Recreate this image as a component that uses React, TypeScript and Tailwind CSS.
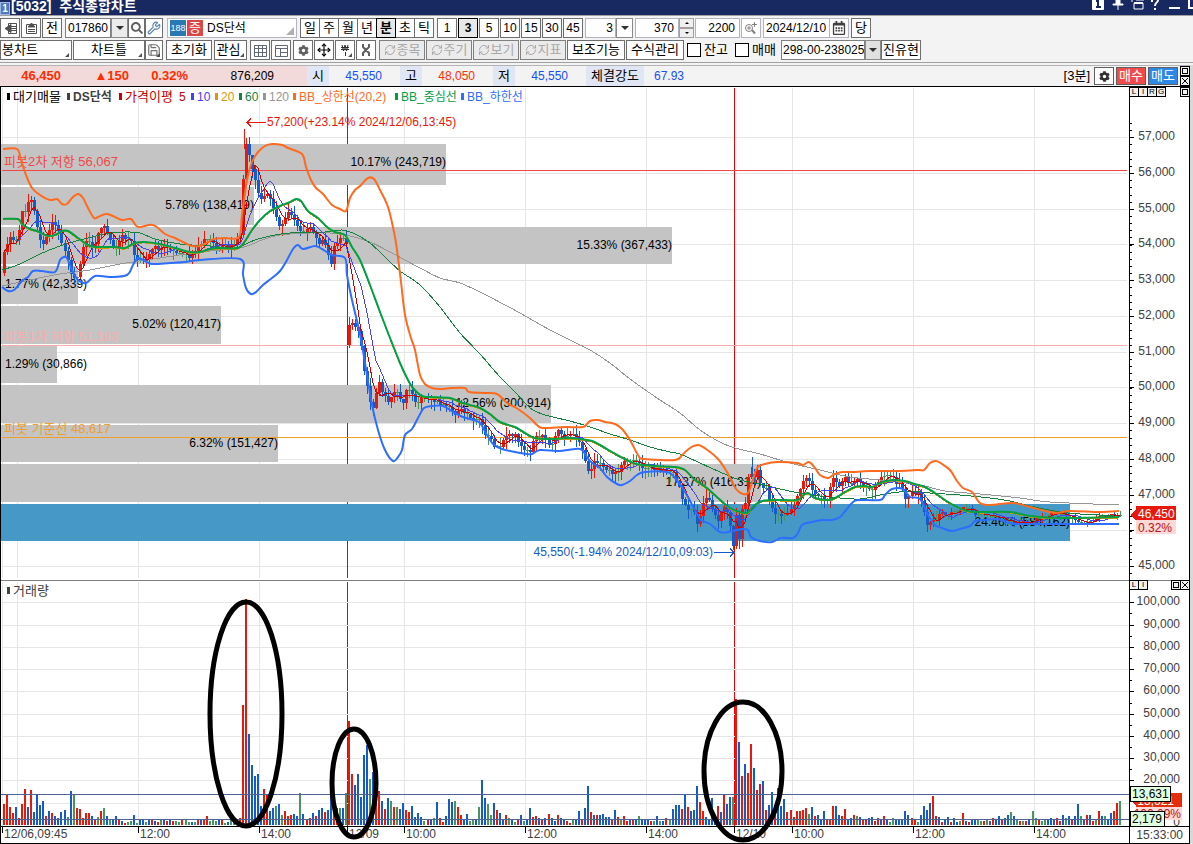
import { useState } from "react"
import type { ReactNode } from "react"
import clsx from "clsx"
import { Move, RefreshCw, Save, Wrench } from "lucide-react"
import { FaCog, FaRegCalendarAlt, FaSearch } from "react-icons/fa"

type Point = [number, number]

const RED = "#e8190a"
const BLUE = "#145bc8"
const GREEN = "#46965f"
const STEP = 3.025

// one entry per 3 minute bar: colour and height
const volumes =
  "r21 r30 r18 r12 b18 r7 r21 r36 b18 r35 b13 b30 b20 b24 r9 b14 r12 b9 b7 b13 b15 g8 b34 g30 r17 r16 r7 r12 r12 b9 r6 g8 r14 g17 b9 g5 b6 b9 r6 b4 r2 g3 g4 b10 g2 b5 b5 g3 b5 r5 b4 r3 g5 b5 r4 b5 r4 g4 g3 r5 g5 g3 b3 g3 r5 b5 r5 r9 g4 g5 g4 b5 r5 g2 b3 g5 g5 r5 r7 r120 r226 b91 b60 b49 b51 b19 r36 r30 b14 b17 g19 b21 g10 r14 r9 r10 b11 b9 g32 b11 r6 r7 b12 r9 b15 b17 r13 b15 b34 r24 r17 g17 b17 g32 r104 r51 b40 b51 b28 b70 b80 g46 b53 r24 r34 b24 r16 b27 g24 r18 g18 b16 b22 r15 r13 b19 b8 b12 b8 g4 r5 b5 g7 b23 r7 r3 b9 b26 b23 g24 r18 r10 b5 b11 g4 g5 b5 g18 b45 b27 g21 g10 b22 r15 b12 b6 r10 g7 b5 g3 r5 b10 g4 b6 b17 r8 r9 b7 r6 b7 r11 b7 b4 r10 b7 b5 r4 r2 g5 b5 b14 r5 b17 b39 r13 b10 r10 b10 b11 b8 b8 r5 b15 r8 g6 r9 r4 b5 r5 b5 g9 b5 b5 b5 r4 g4 b9 g4 b4 r7 g5 b16 b20 b20 r16 b30 r18 b14 b15 b39 r23 r14 b8 b5 b27 b5 r19 b13 r30 b21 b28 g28 r126 b83 r49 b61 r52 r81 b57 r35 r41 b44 r15 b20 b33 r20 b37 b19 b26 r13 r15 r8 r14 r14 r15 r17 g11 b18 r9 b10 b5 b14 r5 r5 r19 b19 b10 r9 r16 b5 b7 r10 g9 b8 r6 r5 b7 b8 r4 r7 b5 r9 b5 g3 g7 b5 b5 b5 b14 b10 r7 r5 g3 b10 b19 b15 b22 r29 r9 b8 r3 b5 b8 r3 b7 b3 g4 r12 b4 r3 b5 b5 g5 g4 r4 g5 b4 r7 b5 b9 r5 b7 b10 g13 b9 g5 r4 g4 r4 b5 g14 g7 r5 g4 g5 b5 b7 b5 r7 r4 b10 g7 b9 r5 b9 b21 g9 b5 r10 b10 r4 g5 r14 b9 g9 b5 b12 r14 r22 g24".split(
    " "
  )

const parse = (s: string): Point[] =>
  s.split(" ").map((p) => p.split(",").map(Number) as Point)

const smooth = (s: string) => {
  const pts = parse(s)
  return pts
    .map((p, i) => {
      if (i === 0) return `M${p[0]} ${p[1]}`
      const a = pts[i - 2] ?? pts[i - 1]
      const b = pts[i - 1]
      const d = pts[i + 1] ?? p
      const c1 = [b[0] + (p[0] - a[0]) / 6, b[1] + (p[1] - a[1]) / 6]
      const c2 = [p[0] - (d[0] - b[0]) / 6, p[1] - (d[1] - b[1]) / 6]
      return `C${c1.join(" ")} ${c2.join(" ")} ${p.join(" ")}`
    })
    .join("")
}

const closes = parse(
  "2,251 6,249 9,240 12,231 14,248 17,237 20,226 23,208 26,215 29,197 32,198 34,208 37,228 40,237 44,244 47,235 50,226 53,222 56,225 59,234 62,243 66,255 69,264 71,277 75,281 78,276 81,254 84,245 87,240 90,245 93,246 96,240 99,230 103,226 106,230 110,238 115,249 119,240 121,234 126,238 131,242 133,252 137,258 141,261 147,261 152,250 156,247 160,249 166,244 172,252 180,255 187,257 193,256 197,248 204,240 210,240 214,246 218,252 224,246 230,248 236,242 240,237 243,177 246,144 249,157 252,170 256,186 259,197 262,200 265,195 269,194 272,200 275,215 279,226 283,222 287,213 290,208 293,218 297,228 303,234 307,226 311,231 315,237 319,243 323,240 328,255 331,262 334,246 338,240 342,240 346,244 348,326 352,323 356,326 359,335 362,348 364,372 367,385 370,400 373,410 376,396 380,377 382,393 387,400 392,398 396,388 400,397 403,407 406,390 408,385 412,395 417,403 420,400 425,396 432,399 438,405 444,402 449,407 453,413 458,413 462,410 468,415 475,419 480,421 485,433 490,438 493,447 500,448 504,436 509,434 515,436 519,442 525,449 531,452 535,437 540,434 545,437 550,448 556,430 560,436 570,434 576,438 582,450 586,468 590,470 595,460 600,465 607,470 613,475 618,470 622,463 630,459 637,463 645,468 655,468 665,470 672,473 678,485 683,505 687,510 692,507 697,523 701,512 703,500 708,498 714,515 718,522 722,508 726,507 730,525 733,546 736,517 739,540 742,510 745,503 748,475 750,470 753,480 757,468 761,487 765,487 770,500 775,512 782,518 787,513 792,510 797,492 803,480 808,481 813,492 820,498 827,500 832,477 838,485 845,478 850,487 857,480 865,486 872,492 877,482 885,473 892,477 900,485 907,500 912,492 918,492 923,508 927,528 931,520 936,518 941,511 947,517 953,508 958,515 963,506 970,507 976,515 985,514 995,516 1005,520 1015,523 1025,521 1040,518 1055,512 1065,515 1075,520 1085,524 1095,518 1105,516 1120,514"
)

const upper = smooth(
  "3,149 17,149 21,160 26,175 32,188 40,195 50,200 57,199 62,204 67,204 72,198 78,194 83,198 88,208 94,218 98,217 106,214 113,216 122,220 131,219 138,227 153,225 165,234 175,238 185,243 192,246 200,246 208,242 214,239 225,238 239,237 242,215 247,180 252,162 258,152 265,146 272,144 282,145 288,148 302,154 306,167 311,180 316,188 323,194 332,205 340,209 346,211 350,198 355,190 360,186 368,178 374,179 380,190 388,207 394,232 397,250 401,282 405,315 411,338 415,350 420,375 425,384 432,388 443,389 451,388 465,388 469,392 485,393 497,394 507,403 518,409 530,418 537,425 543,428 565,427 583,427 590,421 598,420 605,422 615,424 622,429 630,440 638,455 644,459 675,460 682,455 690,448 698,445 706,449 718,459 727,472 736,489 743,494 748,493 752,483 757,468 765,464 778,462 797,463 803,465 809,462 815,468 820,475 828,478 835,474 842,472 852,472 870,471 900,471 918,470 924,470 930,463 936,461 942,464 950,470 957,481 963,488 972,492 980,503 990,505 1013,503 1030,507 1045,511 1057,513 1070,511 1100,512 1119,511"
)

const lower = smooth(
  "2,287 8,291 14,290 22,281 28,277 33,271 42,271 55,272 60,260 64,257 67,258 72,270 78,280 86,283 95,276 110,277 127,275 133,265 138,258 145,261 152,264 170,263 185,262 200,260 240,259 243,275 246,288 251,294 256,292 263,285 272,278 280,271 287,260 293,249 298,245 303,249 315,246 322,249 332,255 345,258 347,275 352,300 358,325 362,345 367,375 372,405 378,430 385,450 393,461 398,457 402,450 405,435 412,429 418,418 424,408 432,406 443,406 453,412 463,417 473,420 480,423 487,435 493,444 502,449 515,452 527,454 532,454 540,450 560,451 575,449 582,450 590,461 600,468 607,477 617,484 622,485 630,481 637,475 645,472 667,472 675,478 685,492 695,510 701,520 710,524 720,532 728,532 742,529 748,530 751,537 760,541 772,542 781,538 793,538 798,533 802,525 812,522 822,520 832,520 840,517 846,510 852,503 858,500 880,500 885,495 892,489 903,489 910,497 920,499 928,515 935,525 942,528 952,531 960,529 970,526 975,521 985,520 997,519 1010,523 1025,524 1119,524"
)

const middle = smooth(
  "3,219 18,219 22,224 30,229 37,231 48,236 57,234 62,231 68,231 78,238 88,245 96,247 115,247 125,248 135,243 145,242 160,244 175,248 190,252 200,252 210,249 220,248 238,248 245,241 252,230 260,220 270,211 280,206 290,202 296,199 301,201 308,211 318,218 327,227 335,232 345,235 352,247 360,260 370,285 380,312 390,338 400,363 407,378 413,388 422,396 430,397 450,398 460,402 470,405 480,408 490,414 500,422 515,427 525,433 535,438 550,439 570,438 580,439 592,441 600,445 612,452 625,459 637,464 655,466 675,467 685,470 695,480 707,488 718,498 730,508 740,512 747,513 755,505 762,501 775,500 797,500 802,496 808,493 815,498 828,500 835,498 845,492 855,487 865,486 872,487 880,483 892,480 905,481 915,484 925,487 935,493 945,500 955,506 967,511 980,512 1010,512 1030,516 1060,518 1119,517"
)

const ma60 = smooth(
  "2,270 20,264 40,254 60,246 80,240 105,234 125,232 140,233 155,239 180,244 210,246 235,248 255,240 275,235 290,233 325,232 342,230 355,234 370,243 385,257 400,271 420,285 440,307 460,333 480,354 500,377 515,392 530,408 545,415 570,421 590,427 610,434 630,440 650,447 670,452 680,454 700,463 720,472 740,480 760,484 780,489 805,494 830,497 860,499 885,494 910,491 930,493 960,495 990,498 1010,501 1030,506 1060,512 1080,514 1119,516"
)

const ma120 = smooth(
  "2,286 30,280 60,274 90,270 120,264 160,258 200,252 240,248 262,240 280,235 310,233 330,233 350,236 370,242 390,252 420,268 440,278 460,283 480,292 505,305 520,313 550,330 570,340 590,350 610,363 630,379 660,400 680,413 700,430 720,442 735,448 760,454 790,463 820,470 850,477 880,480 920,485 945,491 980,494 1020,498 1050,502 1119,505"
)

const profile = [
  { y: 144, h: 41, w: 445, text: "10.17% (243,719)" },
  { y: 187, h: 38, w: 253, text: "5.78% (138,419)" },
  { y: 227, h: 37, w: 671, text: "15.33% (367,433)" },
  { y: 266, h: 38, w: 77, text: "1.77% (42,339)" },
  { y: 306, h: 38, w: 220, text: "5.02% (120,417)" },
  { y: 346, h: 37, w: 56, text: "1.29% (30,866)" },
  { y: 385, h: 38, w: 550, text: "12.56% (300,914)" },
  { y: 425, h: 37, w: 277, text: "6.32% (151,427)" },
  { y: 464, h: 38, w: 760, text: "17.37% (416,314)" },
  { y: 504, h: 37, w: 1069, text: "24.46% (584,162)" },
]

const pivots = [
  { y: 170, color: "#f04848", text: "피봇2차 저항 56,067" },
  { y: 345, color: "#f9adad", text: "피봇1차 저항 51,183" },
  { y: 437, color: "#efa02c", text: "피봇 기준선 48,617" },
]

const legend = [
  { x: 7, color: "#000", text: "대기매물", big: true },
  { x: 67, color: "#404040", text: "DS단석", bold: true },
  { x: 119, color: "#c80000", text: "가격이평", big: true },
  { x: 191, color: "#4040ff", text: "10" },
  { x: 215, color: "#dc960a", text: "20" },
  { x: 239, color: "#14823c", text: "60" },
  { x: 263, color: "#969696", text: "120" },
  { x: 293, color: "#ff6a1e", text: "BB_상한선(20,2)" },
  { x: 395, color: "#00a046", text: "BB_중심선" },
  { x: 461, color: "#2d6eff", text: "BB_하한선" },
]

const gridX = [2, 17, 138, 259, 404, 525, 646, 792, 913, 1034]
const dayX = [347, 734]

const timeLabels: [number, string][] = [
  [2, "12/06,09:45"],
  [138, "12:00"],
  [259, "14:00"],
  [347, "12/09"],
  [404, "10:00"],
  [525, "12:00"],
  [646, "14:00"],
  [734, "12/10"],
  [792, "10:00"],
  [913, "12:00"],
  [1034, "14:00"],
]

const priceY = (p: number) => Math.round(137 + (57 - p) * 35.75)
const volumeY = (v: number) => Math.round(825 - v * 2.227)
const barX = (i: number) => Math.round(3 + i * STEP)
const noise = (n: number) => {
  const v = Math.sin(n * 12.9898) * 43758.5453
  return v - Math.floor(v)
}

const closeAt = (x: number) => {
  const i = closes.findIndex((p) => p[0] >= x)
  if (i <= 0) return closes[i === 0 ? 0 : closes.length - 1][1]
  const [x0, y0] = closes[i - 1]
  const [x1, y1] = closes[i]
  return y0 + ((y1 - y0) * (x - x0)) / (x1 - x0)
}

const candles = volumes.map((_, i) => {
  const x = 4 + i * STEP
  const wobble = x > 940 ? 3 : 5
  return { x: barX(i), y: closeAt(x) + (noise(i + 1) - 0.5) * wobble }
})

const average = (n: number) =>
  candles
    .map((c, i) => {
      const part = candles.slice(Math.max(0, i - n + 1), i + 1)
      const sum = part.reduce((a, b) => a + b.y, 0)
      return `${c.x + 1},${Math.round(sum / part.length)}`
    })
    .join(" ")

const Candles = () => (
  <g>
    {candles.map((c, i) => {
      const newDay = i > 0 && Math.abs(c.y - candles[i - 1].y) > 70
      const open = i === 0 ? 273 : newDay ? 345 : candles[i - 1].y
      const top = Math.round(Math.min(open, c.y))
      const bottom = Math.round(Math.max(open, c.y))
      const flat = bottom - top < 2
      const color = flat ? GREEN : c.y < open ? RED : BLUE
      const reach = c.x > 940 ? 4 : 9
      const up = Math.round(noise(i + 400) * reach)
      const down = Math.round(noise(i + 900) * reach)
      return (
        <g key={i} fill={color}>
          <rect x={c.x + 1} y={top - up} width={1} height={bottom - top + up + down + 1} />
          <rect x={c.x} y={top} width={3} height={Math.max(1, bottom - top)} />
        </g>
      )
    })}
    <rect x={244} y={129} width={1} height={20} fill={RED} />
    <rect x={752} y={457} width={1} height={20} fill={BLUE} />
  </g>
)

const PriceChart = () => (
  <svg
    viewBox="0 87 1190 493"
    className="block h-auto w-full bg-white text-[12px]"
    shapeRendering="crispEdges"
    role="img"
    aria-label="DS단석 3분 차트"
  >
    <g fill="#e6e6e6">
      {gridX.map((x) => (
        <rect key={x} x={x} y={88} width={1} height={490} />
      ))}
      {[57, 56, 55, 54, 53, 52, 51, 50, 49, 48, 47, 46, 45].map((p) => (
        <rect key={p} x={2} y={priceY(p)} width={1125} height={1} />
      ))}
    </g>
    {dayX.map((x) => (
      <rect key={x} x={x} y={88} width={1} height={490} fill="#f00000" />
    ))}
    {profile.map((p, i) => (
      <rect key={p.y} x={1} y={p.y} width={p.w} height={p.h} fill={i === 9 ? "#4698c6" : "#c4c4c4"} />
    ))}
    {profile.map((p) => {
      const short = p.w < 90
      return (
        <text
          key={p.y}
          x={short ? 5 : p.w + 1}
          y={p.y + 22}
          textAnchor={short ? "start" : "end"}
        >
          {p.text}
        </text>
      )
    })}
    {pivots.map((p) => (
      <g key={p.y} fill={p.color}>
        <rect x={2} y={p.y} width={1125} height={1} />
        <text x={4} y={p.y - 4} fontSize={13}>
          {p.text}
        </text>
      </g>
    ))}

    <Candles />
    <g fill="none">
      <path d={ma120} stroke="#969696" />
      <path d={ma60} stroke="#14823c" />
      <polyline points={average(10)} stroke="#4646f0" />
      <polyline points={average(5)} stroke="#c80000" />
      <path d={middle} stroke="#dc960a" transform="translate(0 1)" />
      <g strokeWidth={2} strokeLinejoin="round" shapeRendering="auto">
        <path d={lower} stroke="#2d6eff" />
        <path d={middle} stroke="#00a046" />
        <path d={upper} stroke="#ff6a1e" />
      </g>
    </g>

    {legend.map((l) => (
      <g key={l.x} fill={l.color}>
        <rect x={l.x} y={93} width={3} height={7} />
        <text x={l.x + 6} y={101} fontSize={l.big ? 13 : 12} fontWeight={l.bold ? 700 : 400}>
          {l.text}
        </text>
      </g>
    ))}
    <text x={179} y={101} fill="#c80000">
      5
    </text>

    <g fill={RED}>
      <text x={267} y={126}>
        57,200(+23.14% 2024/12/06,13:45)
      </text>
      <path d="M247 122.5h19M251 118.5l-4 4 4 4" fill="none" stroke={RED} />
    </g>
    <g fill={BLUE}>
      <text x={713} y={556} textAnchor="end">
        45,550(-1.94% 2024/12/10,09:03)
      </text>
      <path d="M714 552.5h20M730 548.5l4 4-4 4" fill="none" stroke={BLUE} />
    </g>

    <rect x={0} y={87} width={1} height={493} />
    <rect x={1129} y={87} width={1} height={493} />
    <rect x={1189} y={87} width={1} height={493} />
    {Array.from({ length: 64 }, (_, i) => {
      const y = Math.round(priceY(57.4) + i * 7.15)
      return y < 574 && <rect key={i} x={1130} y={y} width={2} height={1} />
    })}
    {[57, 56, 55, 54, 53, 52, 51, 50, 49, 48, 47, 46, 45].map((p) => (
      <g key={p} fill="#404040">
        <rect x={1130} y={priceY(p)} width={4} height={1} fill="#000" />
        {p !== 46 && (
          <text x={1175} y={priceY(p) + 3} textAnchor="end">
            {p},000
          </text>
        )}
      </g>
    ))}
    <path d="M1130 515l6-6v12z" fill={RED} />
    <rect x={1136} y={506} width={40} height={14} fill={RED} />
    <text x={1138} y={518} fill="#fff">
      46,450
    </text>
    <rect x={1136} y={520} width={40} height={14} fill="#ffd8d8" />
    <text x={1138} y={532} fill="#b41414">
      0.32%
    </text>
  </svg>
)

const VolumeChart = () => (
  <svg
    viewBox="0 580 1190 264"
    className="block h-auto w-full bg-white text-[12px]"
    shapeRendering="crispEdges"
    role="img"
    aria-label="거래량"
  >
    {dayX.map((x) => (
      <rect key={x} x={x} y={582} width={1} height={244} fill="#f00000" />
    ))}
    <g fill="#e6e6e6">
      {gridX.map((x) => (
        <rect key={x} x={x} y={582} width={1} height={244} />
      ))}
      {[100, 90, 80, 70, 60, 50, 40, 30, 20, 10].map((v) => (
        <rect key={v} x={2} y={volumeY(v)} width={1127} height={1} />
      ))}
    </g>
    {volumes.map((v, i) => {
      const h = Number(v.slice(1))
      const color = v[0] === "r" ? RED : v[0] === "b" ? BLUE : GREEN
      return <rect key={i} x={barX(i)} y={825 - h} width={2} height={h} fill={color} />
    })}
    <rect x={1} y={794} width={1128} height={1} fill="#506496" />
    <rect x={1} y={819} width={1128} height={1} fill="#506496" />
    <rect x={0} y={580} width={1190} height={1} fill="#808080" />
    <rect x={7} y={587} width={3} height={7} fill="#404040" />
    <text x={13} y={595} fontSize={13} fill="#404040">
      거래량
    </text>

    {[100, 90, 80, 70, 60, 50, 40, 30, 20].map((v) => (
      <g key={v}>
        <rect x={1130} y={volumeY(v)} width={4} height={1} />
        <rect x={1130} y={volumeY(v - 5)} width={2} height={1} />
        <text x={1180} y={volumeY(v) + 3} textAnchor="end" fill="#404040">
          {v},000
        </text>
      </g>
    ))}
    <text x={1180} y={826} textAnchor="end" fill="#404040">
      0
    </text>
    <path d="M1130 800l6-6v12z" fill={RED} />
    <rect x={1136} y={793} width={46} height={14} fill="#e62d0a" />
    <text x={1174} y={805} textAnchor="end" fill="#fff">
      13,621
    </text>
    <rect x={1136} y={807} width={46} height={13} fill="#ffd8d8" />
    <text x={1181} y={818} textAnchor="end" fill="#b41414">
      100.09%
    </text>
    <rect x={1130.5} y={786.5} width={40} height={15} fill="#e1ffe1" stroke="#000" />
    <text x={1132} y={798}>
      13,631
    </text>
    <rect x={1130.5} y={811.5} width={34} height={15} fill="#e1ffe1" stroke="#000" />
    <text x={1132} y={823}>
      2,179
    </text>

    <rect x={0} y={580} width={1} height={264} />
    <rect x={1129} y={580} width={1} height={264} />
    <rect x={1189} y={580} width={1} height={264} />
    <rect x={0} y={826} width={1190} height={1} />
    <rect x={0} y={843} width={1190} height={1} />
    {timeLabels.map(([x, text]) => (
      <g key={x}>
        <rect x={x} y={827} width={1} height={6} />
        <text x={x + 2} y={838} fill="#404040">
          {text}
        </text>
      </g>
    ))}
    <text x={1183} y={839} textAnchor="end" fill="#404040">
      15:33:00
    </text>

    <g fill="none" stroke="#000" strokeWidth={5} shapeRendering="auto">
      <ellipse cx={246} cy={714} rx={36} ry={112} />
      <ellipse cx={354} cy={783} rx={22} ry={54} />
      <ellipse cx={743} cy={771} rx={39} ry={69} />
    </g>
  </svg>
)

type BtnProps = {
  children: ReactNode
  className?: string
  corner?: boolean
  active?: boolean
  disabled?: boolean
  label?: string
}

const Btn = ({ children, className = "w-5", corner, active, disabled, label }: BtnProps) => (
  <button
    type="button"
    disabled={disabled}
    aria-label={label}
    className={clsx(
      "relative flex h-5 shrink-0 items-center justify-center border whitespace-nowrap",
      active
        ? "z-10 border-black bg-[#e8e8e8] font-bold"
        : disabled
          ? "border-[#808080] bg-[#ebebeb] text-[#a8a8a8]"
          : "border-[#6e6e6e] bg-white",
      className
    )}
  >
    {children}
    {corner && (
      <span className="absolute right-0.5 bottom-0.5 border-2 border-t-transparent border-r-[#505050] border-b-[#505050] border-l-transparent" />
    )}
  </button>
)

const Arrow = ({ className = "bg-white" }: { className?: string }) => (
  <button
    type="button"
    aria-label="펼치기"
    className={clsx("flex h-5 shrink-0 items-center justify-center border border-[#8a8a8a]", className)}
  >
    <span className="border-x-4 border-t-4 border-x-transparent border-t-[#303030]" />
  </button>
)

const field = "h-5 shrink-0 border bg-white text-[12px] outline-none"

const Check = ({ id, text }: { id: string; text: string }) => (
  <label htmlFor={id} className="flex w-12 shrink-0 items-center gap-[3px] whitespace-nowrap">
    <input
      id={id}
      type="checkbox"
      className="h-3.5 w-3.5 shrink-0 appearance-none border border-black bg-white checked:bg-black"
    />
    {text}
  </label>
)

const TitleBar = () => (
  <header className="flex h-[15px] items-end justify-between overflow-hidden bg-[#182860] text-white">
    <div className="flex items-end gap-px">
      <span className="w-[10px] border border-[#a0b4e6] bg-[#5078be] text-center text-[10px] leading-[11px] font-bold">
        1
      </span>
      <h1 className="text-[14px] leading-[18px] font-bold whitespace-nowrap">
        [5032] &nbsp;주식종합차트
      </h1>
    </div>
    <svg width="101" height="15" viewBox="0 0 101 15" fill="none" stroke="#fff" strokeWidth="2" className="shrink-0">
      <rect x="0" y="-2" width="12" height="12" rx="1" fill="#fff" stroke="none" />
      <path d="M6 0v7M4 1h2M4 7h5" stroke="#182860" />
      <path d="M24 0h4v4h3v1h-10v-1h3zM26 5v5" fill="#fff" strokeWidth="1" />
      <path d="M42 3h9v6h-9zM40 0v2M44 0h8" strokeWidth="1" />
      <path d="M42 3h9" />
      <path d="M60 2v-2M66 0c0 3-3 2-3 6M63 8v2" />
      <path d="M77 8h11M97 0v8h6" />
    </svg>
  </header>
)

const periods = ["일", "주", "월", "년", "분", "초", "틱"]
const minutes = ["1", "3", "5", "10", "15", "30", "45"]

const Toolbar = () => {
  const [code, setCode] = useState("017860")
  const [bars, setBars] = useState("370")

  return (
    <div className="flex flex-col gap-0.5 overflow-hidden border-y border-[#a0a0a0] bg-[#f3f3f3] py-0.5 text-[13px]">
      <div className="flex">
        <div className="flex gap-px">
          <Btn label="이전 창">
            <svg width="13" height="13" fill="none" stroke="#505050">
              <path d="M4.500 1.500h8v10h-8zM7 4.500h5M7 6.500h5M7 8.500h5" />
              <path d="M7 2.500v8l-6-4z" fill="#505050" />
            </svg>
          </Btn>
          <Btn label="위 창">
            <svg width="13" height="13" fill="none" stroke="#505050">
              <path d="M1.500 2.500h10v9h-10zM3 7.500h7M3 9.500h7" />
              <path d="M3 5h7l-3.500-4z" fill="#505050" />
            </svg>
          </Btn>
          <Btn>전</Btn>
        </div>
        <div className="ml-[3px] flex">
          <input
            aria-label="종목코드"
            className={clsx(field, "w-[46px] border-[#808080] pl-0.5")}
            value={code}
            onChange={(e) => setCode(e.target.value)}
          />
          <Arrow className="w-[17px] bg-[#ebebeb]" />
          <Btn className="w-[17px]" label="검색">
            <FaSearch size={12} color="#606060" />
          </Btn>
          <Btn className="w-[18px]" label="설정">
            <Wrench size={14} color="#5a82b4" />
          </Btn>
        </div>
        <div className="relative ml-1 flex h-5 w-[130px] shrink-0 items-center gap-px border border-[#b4b4c0] bg-white pl-0.5">
          <span className="w-4 bg-[#2878b4] text-center text-[9px] leading-4 text-white">188</span>
          <span className="w-4 bg-[#dc4646] text-center leading-4 text-white">증</span>
          <span className="pl-[3px] text-[12px]">DS단석</span>
          <span className="absolute right-0.5 bottom-0.5 border-4 border-t-transparent border-r-[#b0b0b0] border-b-[#b0b0b0] border-l-transparent" />
        </div>
        <div className="ml-1 flex">
          {periods.map((p) => (
            <Btn key={p} className="-ml-px w-5" active={p === "분"}>
              {p}
            </Btn>
          ))}
        </div>
        <div className="ml-[3px] flex gap-px text-[12px]">
          {minutes.map((m) => (
            <Btn key={m} active={m === "3"}>
              {m}
            </Btn>
          ))}
        </div>
        <div className="ml-0.5 flex">
          <input
            aria-label="분 간격"
            className={clsx(field, "w-[31px] border-[#b4b4c0] pr-0.5 text-right")}
            defaultValue="3"
          />
          <Arrow className="w-[17px] bg-white" />
        </div>
        <div className="ml-0.5 flex">
          <input
            aria-label="봉 개수"
            className={clsx(field, "w-11 border-[#b4b4c0] pr-1 text-right")}
            value={bars}
            onChange={(e) => setBars(e.target.value)}
          />
          <div className="flex w-[15px] flex-col">
            <button
              type="button"
              aria-label="늘리기"
              className="flex h-2.5 items-center justify-center border border-[#a0a0a0] bg-[#f0f0f0]"
              onClick={() => setBars(String(Number(bars) + 1))}
            >
              <span className="border-x-2 border-b-2 border-x-transparent border-b-black" />
            </button>
            <button
              type="button"
              aria-label="줄이기"
              className="flex h-2.5 items-center justify-center border border-[#a0a0a0] bg-[#f0f0f0]"
              onClick={() => setBars(String(Number(bars) - 1))}
            >
              <span className="border-x-2 border-t-2 border-x-transparent border-t-black" />
            </button>
          </div>
        </div>
        <input
          aria-label="전체 봉 개수"
          className={clsx(field, "ml-px w-[45px] border-[#b4b4c0] pr-1 text-right")}
          defaultValue="2200"
        />
        <Btn className="ml-px w-5 border-[#b4b4c0]" label="확대">
          <svg width="14" height="14" fill="none" stroke="#808080">
            <circle cx="5" cy="7" r="3.5" />
            <path d="M5 5v4M3 7h4M10.500 1v5M8 3.500h5" />
            <path d="M8 9l3 3.500" strokeWidth="2" />
          </svg>
        </Btn>
        <div className="ml-0.5 flex">
          <input
            aria-label="날짜"
            className={clsx(field, "w-[67px] border-[#b4b4c0] pl-0.5")}
            defaultValue="2024/12/10"
          />
          <Btn className="-ml-px w-5 border-[#b4b4c0]" label="달력">
            <FaRegCalendarAlt size={14} color="#404040" />
          </Btn>
        </div>
        <Btn className="ml-0.5 w-5">당</Btn>
      </div>

      <div className="flex">
        <Btn className="w-[72px] pr-8" corner>
          봉차트
        </Btn>
        <Btn className="ml-px w-[72px]" corner>
          차트틀
        </Btn>
        <Btn className="w-[18px]" corner label="저장">
          <Save size={14} color="#707070" />
        </Btn>
        <Btn className="ml-[3px] w-[46px]">초기화</Btn>
        <Btn className="ml-0.5 w-[33px] pr-1" corner>
          관심
        </Btn>
        <div className="ml-[3px] flex gap-px">
          <Btn label="표">
            <svg width="13" height="13" fill="none" stroke="#606878">
              <path d="M.5 1.500h12v11h-12zM.5 4.500h12M.5 8.500h12M4.500 1.500v11M8.500 1.500v11" />
            </svg>
          </Btn>
          <Btn label="배치">
            <svg width="13" height="13" fill="none" stroke="#606878">
              <path d="M.5 1.500h12v11h-12zM.5 4.500h12M5.500 4.500v8M5.500 8.500h7" />
            </svg>
          </Btn>
        </div>
        <div className="ml-0.5 flex gap-px">
          <Btn label="환경설정">
            <FaCog size={11} color="#606060" />
          </Btn>
          <Btn label="십자선">
            <Move size={14} color="#000" />
          </Btn>
          <Btn corner label="원화">
            <svg width="11" height="13" fill="none" stroke="#303030">
              <path d="M2 1l1.500 6L5 1l1.500 6L8 1M1 3.500h8M1 5.500h8M5.500 8v4" />
            </svg>
          </Btn>
          <Btn label="도구">
            <svg width="12" height="14" fill="none" stroke="#606060" strokeWidth="2">
              <path d="M3 1v3l6 6v3M9 1v3l-6 6v3" />
            </svg>
          </Btn>
        </div>
        <div className="ml-[3px] flex gap-px">
          {["종목", "주기", "보기", "지표"].map((t) => (
            <Btn key={t} className="w-[46px] gap-px" disabled>
              <RefreshCw size={12} />
              {t}
            </Btn>
          ))}
        </div>
        <Btn className="ml-px w-[58px]">보조기능</Btn>
        <Btn className="ml-px w-[58px]">수식관리</Btn>
        <div className="ml-[3px] flex">
          <Check id="balance" text="잔고" />
          <Check id="trade" text="매매" />
        </div>
        <select
          aria-label="계좌번호"
          className="-ml-0.5 h-5 w-[84px] shrink-0 appearance-none border border-[#808080] bg-white pl-px text-[12px]"
        >
          <option>298-00-238025</option>
        </select>
        <Arrow className="w-4 bg-[#e0e0e0]" />
        <span className="flex h-5 w-10 shrink-0 items-center justify-center border border-[#6e6e6e] bg-white whitespace-nowrap">
          진유현
        </span>
      </div>
    </div>
  )
}

const Cell = ({ children, className = "w-[22px]" }: { children: ReactNode; className?: string }) => (
  <span className={clsx("flex h-full shrink-0 items-center justify-center bg-[#e0e6f4] whitespace-nowrap", className)}>
    {children}
  </span>
)

const value = "w-[71px] shrink-0 pr-[18px] text-right text-[12px]"

const QuoteBar = () => (
  <div className="mt-0.5 flex h-[22px] items-center justify-between border-t border-b border-t-[#b4b4b4] border-b-black bg-[#f3f3f3] text-[13px]">
    <div className="flex h-full items-center">
      <div className="flex h-full w-[307px] shrink-0 items-center bg-[#f2dada] text-[#ff2d00]">
        <b className="w-[61px] text-right">46,450</b>
        <b className="w-[68px] text-right">▲150</b>
        <b className="w-[59px] text-right">0.32%</b>
        <span className="w-[86px] text-right text-[12px] text-black">876,209</span>
      </div>
      <Cell>시</Cell>
      <span className={clsx(value, "text-[#1450ff]")}>45,550</span>
      <Cell>고</Cell>
      <span className={clsx(value, "text-[#ff2d00]")}>48,050</span>
      <Cell>저</Cell>
      <span className={clsx(value, "text-[#1450ff]")}>45,550</span>
      <Cell className="w-[58px]">체결강도</Cell>
      <span className="pl-2.5 text-[12px] text-[#1450ff]">67.93</span>
    </div>
    <div className="flex items-center gap-0.5 pr-px">
      <span className="mr-0.5">[3분]</span>
      <button
        type="button"
        aria-label="차트 설정"
        className="flex h-[18px] w-5 items-center justify-center border border-[#606060] bg-white"
      >
        <FaCog size={11} color="#303030" />
      </button>
      <button type="button" className="h-[18px] w-[30px] border border-[#606060] bg-[#f04b4b] leading-4 text-white">
        매수
      </button>
      <button type="button" className="h-[18px] w-[30px] border border-[#606060] bg-[#2d87e6] leading-4 text-white">
        매도
      </button>
      <div className="flex flex-col">
        <MiniBtn kind="box" />
        <MiniBtn kind="close" />
      </div>
    </div>
  </div>
)

const MiniBtn = ({ kind }: { kind: string }) => (
  <button
    type="button"
    aria-label={kind === "box" ? "최대화" : kind === "close" ? "닫기" : kind}
    className="-mr-px flex h-[10px] w-[10px] items-center justify-center border border-black bg-[#f0f0f0] text-[8px] leading-[8px]"
  >
    {kind === "box" ? (
      <span className="h-[6px] w-[6px] border border-black" />
    ) : kind === "close" ? (
      <svg width="6" height="6" stroke="#000">
        <path d="M0 0l6 6M6 0l-6 6" />
      </svg>
    ) : (
      kind
    )}
  </button>
)

const PaneButtons = ({ left, right }: { left: string[]; right: string[] }) => (
  <div className="absolute top-0 right-0 flex w-[61px] justify-between pr-px">
    <div className="flex">
      {left.map((k) => (
        <MiniBtn key={k} kind={k} />
      ))}
    </div>
    <div className="flex">
      {right.map((k) => (
        <MiniBtn key={k} kind={k} />
      ))}
    </div>
  </div>
)

const App = () => {
  return (
    <div className="bg-[#f3f3f3] font-['Liberation_Sans','Noto_Sans_CJK_KR',sans-serif] text-black">
      <TitleBar />
      <Toolbar />
      <main className="border-r-3 border-[#d8d8d8]">
        <QuoteBar />
        <section className="relative">
          <PriceChart />
          <PaneButtons left={["L", "I", "R", "G"]} right={["box"]} />
        </section>
        <section className="relative">
          <VolumeChart />
          <PaneButtons left={["L", "I"]} right={["box", "close"]} />
        </section>
      </main>
    </div>
  )
}

export default App
